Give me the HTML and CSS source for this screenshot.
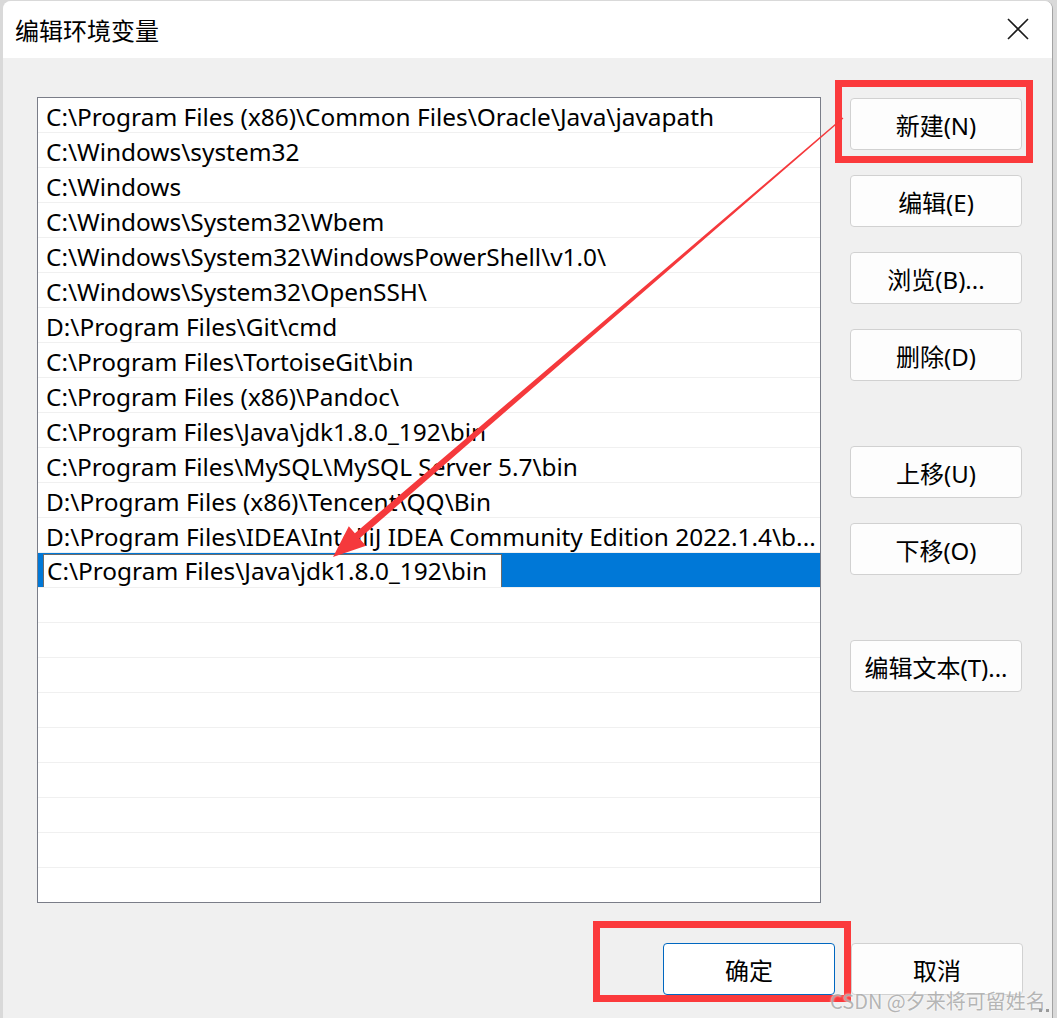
FILE: index.html
```html
<!DOCTYPE html>
<html lang="zh-CN">
<head>
    <meta charset="UTF-8">
    <title>编辑环境变量</title>
    <link rel="stylesheet" href="styles.css">
</head>
<body>
    <div class="desk">
        <div class="window">
            <div class="titlebar">
                <span class="title">编辑环境变量</span>
                <svg class="close" width="24" height="24" viewBox="0 0 24 24">
                    <path d="M2 2 L22 22 M22 2 L2 22" stroke="#1b1b1b" stroke-width="1.6" fill="none"/>
                </svg>
            </div>
            <div class="body">
                <div class="main">
                    <ul class="pathlist">
                        <li>C:\Program Files (x86)\Common Files\Oracle\Java\javapath</li>
                        <li>C:\Windows\system32</li>
                        <li>C:\Windows</li>
                        <li>C:\Windows\System32\Wbem</li>
                        <li>C:\Windows\System32\WindowsPowerShell\v1.0\</li>
                        <li>C:\Windows\System32\OpenSSH\</li>
                        <li>D:\Program Files\Git\cmd</li>
                        <li>C:\Program Files\TortoiseGit\bin</li>
                        <li>C:\Program Files (x86)\Pandoc\</li>
                        <li>C:\Program Files\Java\jdk1.8.0_192\bin</li>
                        <li>C:\Program Files\MySQL\MySQL Server 5.7\bin</li>
                        <li>D:\Program Files (x86)\Tencent\QQ\Bin</li>
                        <li>D:\Program Files\IDEA\IntelliJ IDEA Community Edition 2022.1.4\b...</li>
                        <li class="selected"><span class="edit">C:\Program Files\Java\jdk1.8.0_192\bin</span></li>
                        <li></li>
                        <li></li>
                        <li></li>
                        <li></li>
                        <li></li>
                        <li></li>
                        <li></li>
                        <li></li>
                        <li></li>
                    </ul>
                    <div class="side">
                        <button>新建(N)</button>
                        <button>编辑(E)</button>
                        <button>浏览(B)...</button>
                        <button>删除(D)</button>
                        <button class="sep">上移(U)</button>
                        <button>下移(O)</button>
                        <button class="sep">编辑文本(T)...</button>
                    </div>
                </div>
                <div class="footer">
                    <button class="ok">确定</button>
                    <button>取消</button>
                </div>
            </div>
        </div>

        <!-- 标注 -->
        <div class="mark mark-new"></div>
        <div class="mark mark-ok"></div>
        <svg class="arrow" width="1057" height="1018" viewBox="0 0 1057 1018">
            <polygon fill="#f5393c" points="842.6,117.6 354.9,533.3 348.8,526.3 333,557 366,545.8 359.4,538.6 843.4,118.4"/>
        </svg>
        <div class="watermark">CSDN @夕来将可留姓名</div>
        <div class="grip"></div>
    </div>
</body>
</html>
```

FILE: styles.css
```css
body { margin: 0; padding: 0; font-family: "Noto Sans", "Noto Sans CJK SC", sans-serif; color: #000; }
ul { margin: 0; padding: 0; list-style: none; }

.desk { position: relative; height: 1018px; overflow: hidden; background: #d9d9d9; padding-left: 3px; display: flex; }
.window { width: 1049px; height: 1030px; margin-top: 1px; background: #f0f0f0; border-radius: 8px 8px 0 0; border-right: 1px solid #a3a3a3; display: flex; flex-direction: column; overflow: hidden; }

.titlebar { height: 57px; background: #fff; display: flex; align-items: center; justify-content: space-between; padding: 0 22px 0 12px; flex-shrink: 0; }
.title { font-family: "Noto Sans CJK SC", sans-serif; font-size: 24px; margin-top: -1px; }
.close { display: block; margin-top: -1px; }

.body { padding: 39px 29px 0 34px; }
.main { display: flex; align-items: flex-start; }

.pathlist { width: 784px; height: 806px; box-sizing: border-box; border: 1px solid #7a7d88; background: #fff; overflow: hidden; }
.pathlist li { height: 35px; box-sizing: border-box; border-bottom: 1px solid #f0f0f0; padding: 2px 0 0 8px; font-size: 24.4px; line-height: 33px; white-space: nowrap; overflow: hidden; }
.pathlist li.selected { background: #0078d7; padding: 1px 0 0 5px; }
.edit { display: block; width: 459px; height: 34px; box-sizing: border-box; border: 1px solid #6b6b6b; background: #fff; padding-left: 3px; line-height: 32px; }

.side { display: flex; flex-direction: column; margin-left: 29px; padding-top: 1px; }
button { width: 172px; height: 52px; box-sizing: border-box; border: 1px solid #d1d1d1; border-radius: 4px; background: #fdfdfd; font-family: "Noto Sans", "Noto Sans CJK SC", sans-serif; font-size: 24px; color: #000; padding: 0; }
.side button + button { margin-top: 25px; }
.side button.sep { margin-top: 65px; }

.footer { display: flex; justify-content: flex-end; gap: 16px; margin-top: 40px; }
.footer .ok { border-color: #0067c0; background: #fff; }

.mark { position: absolute; border: 7px solid #fb3a3c; box-sizing: border-box; }
.mark-new { left: 835px; top: 80px; width: 198px; height: 83px; }
.mark-ok { left: 593px; top: 921px; width: 258px; height: 81px; }
.arrow { position: absolute; left: 0; top: 0; }

.watermark { position: absolute; left: 830px; top: 986px; font-family: "Noto Sans CJK SC", sans-serif; font-size: 20px; color: rgba(150, 150, 150, .7); text-shadow: 0 0 2px #fff; white-space: nowrap; }
.grip { position: absolute; right: 8px; bottom: 2px; width: 10px; height: 4px; border-top: 3px dotted #9a9a9a; }
```
